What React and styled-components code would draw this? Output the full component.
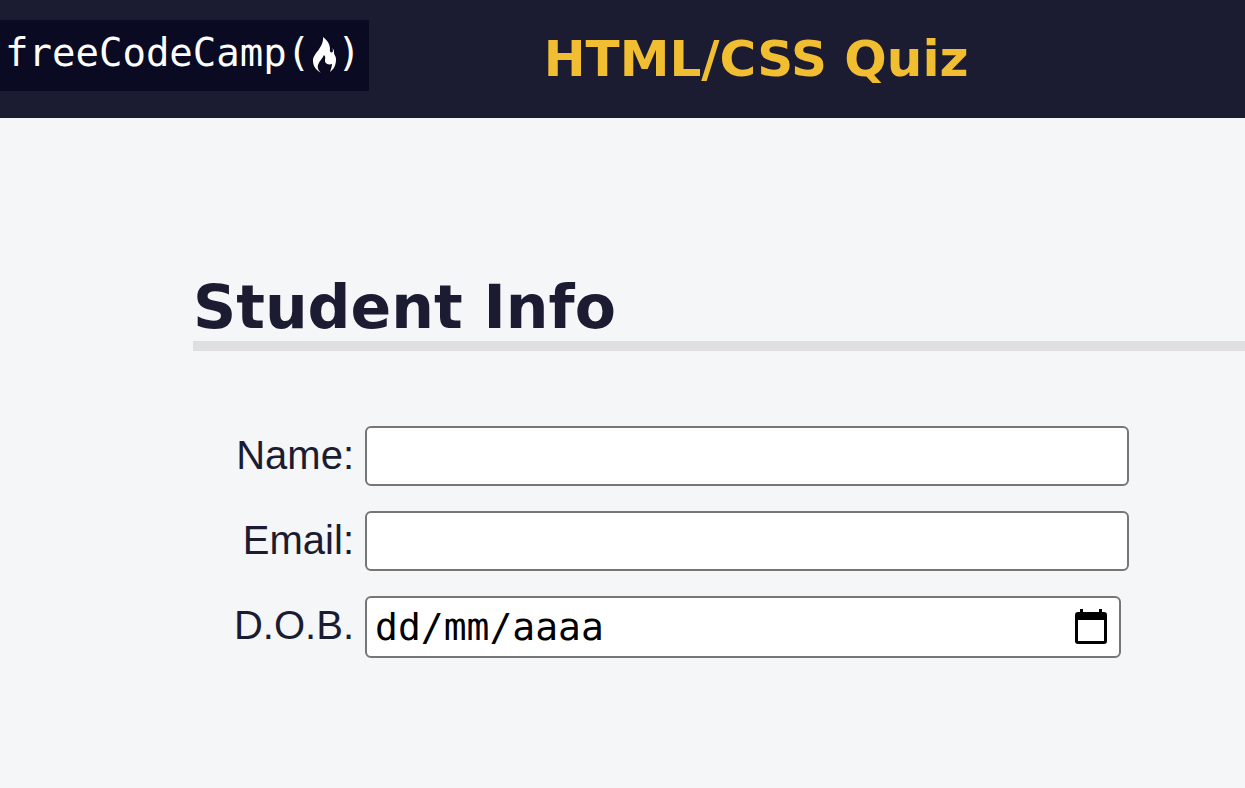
import React from "react";
import styled, { createGlobalStyle } from "styled-components";

const GlobalStyle = createGlobalStyle`
  *, *::before, *::after { box-sizing: border-box; }
  body {
    margin: 0;
    background: #f5f6f7;
    color: #1b1b32;
    font-family: "Liberation Sans", Arial, sans-serif;
  }
`;

const Header = styled.header`
  display: flex;
  align-items: flex-start;
  gap: 175px;
  min-height: 118px;
  padding-top: 20px;
  background: #1b1b32;
`;

const Logo = styled.div`
  display: flex;
  flex: none;
  height: 71px;
  padding: 9px 8px 0 5px;
  background: #0a0a23;
  color: #ffffff;
  font-family: "DejaVu Sans Mono", monospace;
  font-size: 39px;
  line-height: 48px;
`;

const Flame = styled.svg`
  width: 24px;
  height: 36px;
  margin: 8px 0 0 3px;
`;

const Title = styled.h1`
  margin: 0;
  color: #f1be32;
  font-family: Verdana, "DejaVu Sans", sans-serif;
  font-size: 50px;
  line-height: 78px;
  white-space: nowrap;
`;

const Section = styled.section`
  margin: 156px 0 0 193px;
`;

const Heading = styled.h2`
  margin: 0 0 75px;
  border-bottom: 10px solid #dfdfe2;
  font-family: Verdana, "DejaVu Sans", sans-serif;
  font-size: 60px;
  line-height: 67px;
`;

const Form = styled.form`
  display: grid;
  gap: 25px;
  padding-right: 116px;
`;

const Field = styled.div`
  display: grid;
  grid-template-columns: 161px 1fr;
  align-items: start;
  gap: 11px;
`;

const Label = styled.label`
  font-size: 40px;
  line-height: 58px;
  text-align: right;
`;

const Box = styled.div`
  display: flex;
  align-items: center;
  height: ${(p) => (p.$date ? 62 : 60)}px;
  margin-right: ${(p) => (p.$date ? 8 : 0)}px;
  padding: 0 ${(p) => (p.$date ? 12 : 8)}px 0 8px;
  border: 2px solid #767676;
  border-radius: 6px;
  background: #ffffff;
`;

const Input = styled.input`
  flex: 1;
  min-width: 0;
  padding: 0;
  border: 0;
  outline: 0;
  background: transparent;
  color: #000000;
  font-family: "DejaVu Sans Mono", monospace;
  font-size: 38px;
  line-height: 48px;
  &::placeholder { color: #000000; opacity: 1; }
`;

const CalendarButton = styled.button`
  display: flex;
  padding: 0;
  border: 0;
  background: transparent;
  color: #000000;
`;

function TextField({ id, label, type }) {
  return (
    <Field>
      <Label htmlFor={id}>{label}</Label>
      <Box>
        <Input id={id} name={id} type={type} />
      </Box>
    </Field>
  );
}

function DateField({ id, label }) {
  return (
    <Field>
      <Label htmlFor={id}>{label}</Label>
      <Box $date>
        <Input id={id} name={id} type="text" inputMode="numeric" placeholder="dd/mm/aaaa" />
        <CalendarButton type="button" aria-label="Calendar">
          <svg width="32" height="36" viewBox="0 0 32 36" aria-hidden="true">
            <path
              fill="currentColor"
              fillRule="evenodd"
              d="M5 0h3v3h16V0h3v3h2a3 3 0 0 1 3 3v26a3 3 0 0 1-3 3H3a3 3 0 0 1-3-3V6a3 3 0 0 1 3-3h2zM3 11v21h26V11z"
            />
          </svg>
        </CalendarButton>
      </Box>
    </Field>
  );
}

export default function App() {
  return (
    <>
      <GlobalStyle />
      <Header>
        <Logo>
          <span>freeCodeCamp(</span>
          <Flame viewBox="0 0 24 36" aria-hidden="true">
            <path
              fill="currentColor"
              d="M10 0C14 3 17 7 17 12c-1 3 2 5 3 2 0-1 0-2-1-3 2 1 2 3 2 5 0 2 2 3 2 6 0 6-2 10-6 13 1-3 2-6 2-8-3 1-7 0-7-3 0-3 1-4-1-6-1 3-5 6-6 10-1 3 1 6 3 8C3 33 0 29 0 24 0 16 11 11 10 0z"
            />
          </Flame>
          <span>)</span>
        </Logo>
        <Title>HTML/CSS Quiz</Title>
      </Header>
      <main>
        <Section>
          <Heading>Student Info</Heading>
          <Form>
            <TextField id="name" label="Name:" type="text" />
            <TextField id="email" label="Email:" type="email" />
            <DateField id="dob" label="D.O.B." />
          </Form>
        </Section>
      </main>
    </>
  );
}
